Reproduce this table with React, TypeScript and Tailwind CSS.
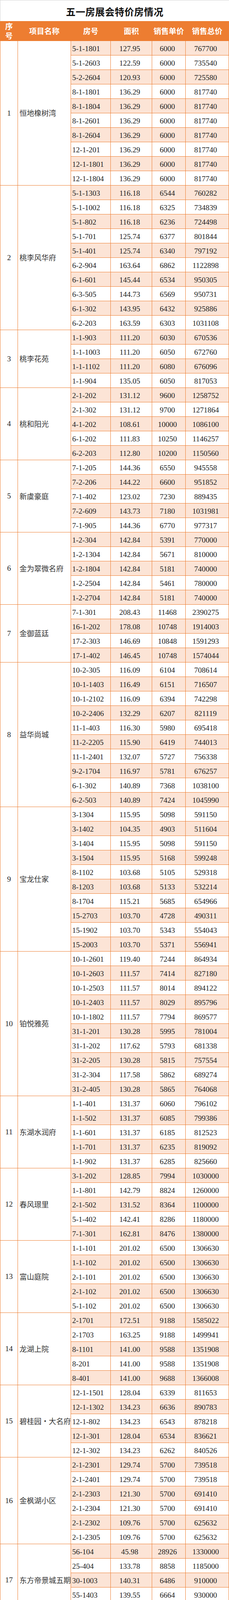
const GROUPS: { name: string; rows: string[][] }[] = [
  { name: "恒地橡树湾", rows: [["5-1-1801", "127.95", "6000", "767700"], ["5-1-2603", "122.59", "6000", "735540"], ["5-2-2604", "120.93", "6000", "725580"], ["8-1-1801", "136.29", "6000", "817740"], ["8-1-1804", "136.29", "6000", "817740"], ["8-1-2601", "136.29", "6000", "817740"], ["8-1-2604", "136.29", "6000", "817740"], ["12-1-201", "136.29", "6000", "817740"], ["12-1-1801", "136.29", "6000", "817740"], ["12-1-1804", "136.29", "6000", "817740"]] },
  { name: "桃李风华府", rows: [["5-1-1303", "116.18", "6544", "760282"], ["5-1-1002", "116.18", "6325", "734839"], ["5-1-802", "116.18", "6236", "724498"], ["5-1-701", "125.74", "6377", "801844"], ["5-1-401", "125.74", "6340", "797192"], ["6-2-904", "163.64", "6862", "1122898"], ["6-1-601", "145.44", "6534", "950305"], ["6-3-505", "144.73", "6569", "950731"], ["6-1-302", "143.95", "6432", "925886"], ["6-2-203", "163.59", "6303", "1031108"]] },
  { name: "桃李花苑", rows: [["1-1-903", "111.20", "6030", "670536"], ["1-1-1003", "111.20", "6050", "672760"], ["1-1-1102", "111.20", "6080", "676096"], ["1-1-904", "135.05", "6050", "817053"]] },
  { name: "桃和阳光", rows: [["2-1-202", "131.12", "9600", "1258752"], ["2-1-302", "131.12", "9700", "1271864"], ["4-1-202", "108.61", "10000", "1086100"], ["6-1-202", "111.83", "10250", "1146257"], ["6-2-203", "112.80", "10200", "1150560"]] },
  { name: "新虞豪庭", rows: [["7-1-205", "144.36", "6550", "945558"], ["7-2-206", "144.22", "6600", "951852"], ["7-1-402", "123.02", "7230", "889435"], ["7-2-609", "143.73", "7180", "1031981"], ["7-1-905", "144.36", "6770", "977317"]] },
  { name: "金为翠微名府", rows: [["1-2-304", "142.84", "5391", "770000"], ["1-2-1304", "142.84", "5671", "810000"], ["1-2-1804", "142.84", "5181", "740000"], ["1-2-2504", "142.84", "5461", "780000"], ["1-2-2704", "142.84", "5181", "740000"]] },
  { name: "金御蓝廷", rows: [["7-1-301", "208.43", "11468", "2390275"], ["16-1-202", "178.08", "10748", "1914003"], ["17-2-303", "146.69", "10848", "1591293"], ["17-1-402", "146.45", "10748", "1574044"]] },
  { name: "益华尚城", rows: [["10-2-305", "116.09", "6104", "708614"], ["10-1-1403", "116.49", "6151", "716507"], ["10-1-2102", "116.09", "6394", "742298"], ["10-2-2406", "132.29", "6207", "821119"], ["11-1-403", "116.30", "5980", "695418"], ["11-2-2205", "115.90", "6419", "744013"], ["11-1-2401", "132.07", "5727", "756338"], ["9-2-1704", "116.97", "5781", "676257"], ["6-1-302", "140.89", "7368", "1038100"], ["6-2-503", "140.89", "7424", "1045990"]] },
  { name: "宝龙仕家", rows: [["3-1304", "115.95", "5098", "591150"], ["3-1402", "104.35", "4903", "511604"], ["3-1404", "115.95", "5098", "591150"], ["3-1504", "115.95", "5168", "599248"], ["8-1102", "103.68", "5105", "529318"], ["8-1203", "103.68", "5133", "532214"], ["8-1704", "115.21", "5685", "654966"], ["15-2703", "103.70", "4728", "490311"], ["15-1902", "103.70", "5343", "554043"], ["15-2003", "103.70", "5371", "556941"]] },
  { name: "铂悦雅苑", rows: [["10-1-2601", "119.40", "7244", "864934"], ["10-1-2603", "111.57", "7414", "827180"], ["10-1-2503", "111.57", "8014", "894122"], ["10-1-2403", "111.57", "8029", "895796"], ["10-1-1802", "111.57", "7794", "869577"], ["31-1-201", "130.28", "5995", "781004"], ["31-1-202", "117.62", "5793", "681338"], ["31-2-205", "130.28", "5815", "757554"], ["31-2-304", "117.58", "5862", "689274"], ["31-2-405", "130.28", "5865", "764068"]] },
  { name: "东湖水润府", rows: [["1-1-401", "131.37", "6060", "796102"], ["1-1-502", "131.37", "6085", "799386"], ["1-1-601", "131.37", "6185", "812523"], ["1-1-701", "131.37", "6235", "819092"], ["1-1-902", "131.37", "6285", "825660"]] },
  { name: "春风璟里", rows: [["3-1-202", "128.85", "7994", "1030000"], ["1-1-801", "142.79", "8824", "1260000"], ["2-1-502", "131.52", "8364", "1100000"], ["5-1-402", "142.41", "8286", "1180000"], ["7-1-301", "162.81", "8476", "1380000"]] },
  { name: "富山庭院", rows: [["1-1-101", "201.02", "6500", "1306630"], ["1-1-102", "201.02", "6500", "1306630"], ["2-1-101", "201.02", "6500", "1306630"], ["2-1-102", "201.02", "6500", "1306630"], ["5-1-102", "201.02", "6500", "1306630"]] },
  { name: "龙湖上院", rows: [["2-1701", "172.51", "9188", "1585022"], ["2-1703", "163.25", "9188", "1499941"], ["8-1101", "141.00", "9588", "1351908"], ["8-201", "141.00", "9588", "1351908"], ["8-401", "141.00", "9688", "1366008"]] },
  { name: "碧桂园·大名府", rows: [["12-1-1501", "128.04", "6339", "811653"], ["12-1-1302", "134.23", "6636", "890783"], ["12-1-802", "134.23", "6543", "878218"], ["12-1-301", "128.04", "6534", "836621"], ["12-1-302", "134.23", "6262", "840526"]] },
  { name: "金枫湖小区", rows: [["2-1-2301", "129.74", "5700", "739518"], ["2-1-2401", "129.74", "5700", "739518"], ["2-1-2303", "121.30", "5700", "691410"], ["2-1-2304", "121.30", "5700", "691410"], ["2-1-2302", "109.76", "5700", "625632"], ["2-1-2305", "109.76", "5700", "625632"]] },
  { name: "东方帝景城五期", rows: [["56-104", "45.98", "28926", "1330000"], ["25-404", "133.78", "8858", "1185000"], ["30-1003", "140.31", "6486", "910000"], ["55-1403", "139.55", "6664", "930000"], ["56-303", "135.80", "6406", "870000"]] },
  { name: "观樾台", rows: [["8-1-501", "141.98", "7733", "1097908"], ["8-1-402", "137.12", "7518", "1030924"], ["9-2-1404", "139.47", "5871", "818830"], ["9-2-1803", "129.12", "5712", "737492"], ["9-2-1804", "139.47", "5600", "781024"]] },
];

const HEADERS = ["项目名称", "房号", "面积", "销售单价", "销售总价"];

// full class names so tailwind picks them up
const SPAN: Record<number, string> = {
  4: "row-span-4",
  5: "row-span-5",
  6: "row-span-6",
  10: "row-span-10",
};

export default function App() {
  let stripe = 0;

  return (
    <div className="w-[587px] bg-white text-[#222] font-['Liberation_Serif','Noto_Sans_CJK_SC',serif]">
      {/* title */}
      <div className="h-[54px] flex items-center justify-center pt-[6px] border-t border-l border-[#d4d4d4] font-['Noto_Sans_CJK_SC',sans-serif] text-[24.5px] font-bold text-[#111] tracking-[0.5px]">
        五一房展会特价房情况
      </div>

      {/* table: 1px orange gaps act as cell borders */}
      <div className="grid grid-cols-[44px_135px_101px_105px_85px_110px] grid-rows-[50px] auto-rows-[36px] gap-px bg-[#ED7D31] px-px pb-px">
        <div className="flex flex-col items-center justify-center leading-[24px] text-white font-bold text-[19.5px] font-['Noto_Sans_CJK_SC',sans-serif]">
          <span>序</span>
          <span>号</span>
        </div>
        {HEADERS.map((h) => (
          <div
            key={h}
            className="flex items-center justify-center whitespace-nowrap text-white font-bold text-[19.5px] font-['Noto_Sans_CJK_SC',sans-serif]"
          >
            {h}
          </div>
        ))}

        {GROUPS.map((g, gi) =>
          g.rows.map((r, ri) => {
            const shaded = stripe++ % 2 === 0;
            const cell = shaded ? "bg-[#FCE4D6]" : "bg-white";
            return (
              <div key={`${gi}-${ri}`} className="contents">
                {ri === 0 && (
                  <>
                    <div className={`${SPAN[g.rows.length]} col-start-1 bg-white flex items-center justify-center text-[19.5px]`}>
                      {gi + 1}
                    </div>
                    <div
                      className={`${SPAN[g.rows.length]} col-start-2 bg-white flex items-center pl-[4px] whitespace-nowrap font-['Noto_Sans_CJK_SC',sans-serif] text-[18.8px] text-[#333]`}
                    >
                      {g.name}
                    </div>
                  </>
                )}
                <div className={`col-start-3 flex items-center pl-[3px] pt-[3px] whitespace-nowrap text-[19.5px] ${cell}`}>{r[0]}</div>
                <div className={`flex items-center justify-center pr-[8px] pt-[3px] text-[19.5px] ${cell}`}>{r[1]}</div>
                <div className={`flex items-center justify-center pr-[7px] pt-[3px] text-[19.5px] ${cell}`}>{r[2]}</div>
                <div className={`flex items-center justify-center pr-[8px] pt-[3px] text-[19.5px] ${cell}`}>{r[3]}</div>
              </div>
            );
          })
        )}
      </div>
    </div>
  );
}
